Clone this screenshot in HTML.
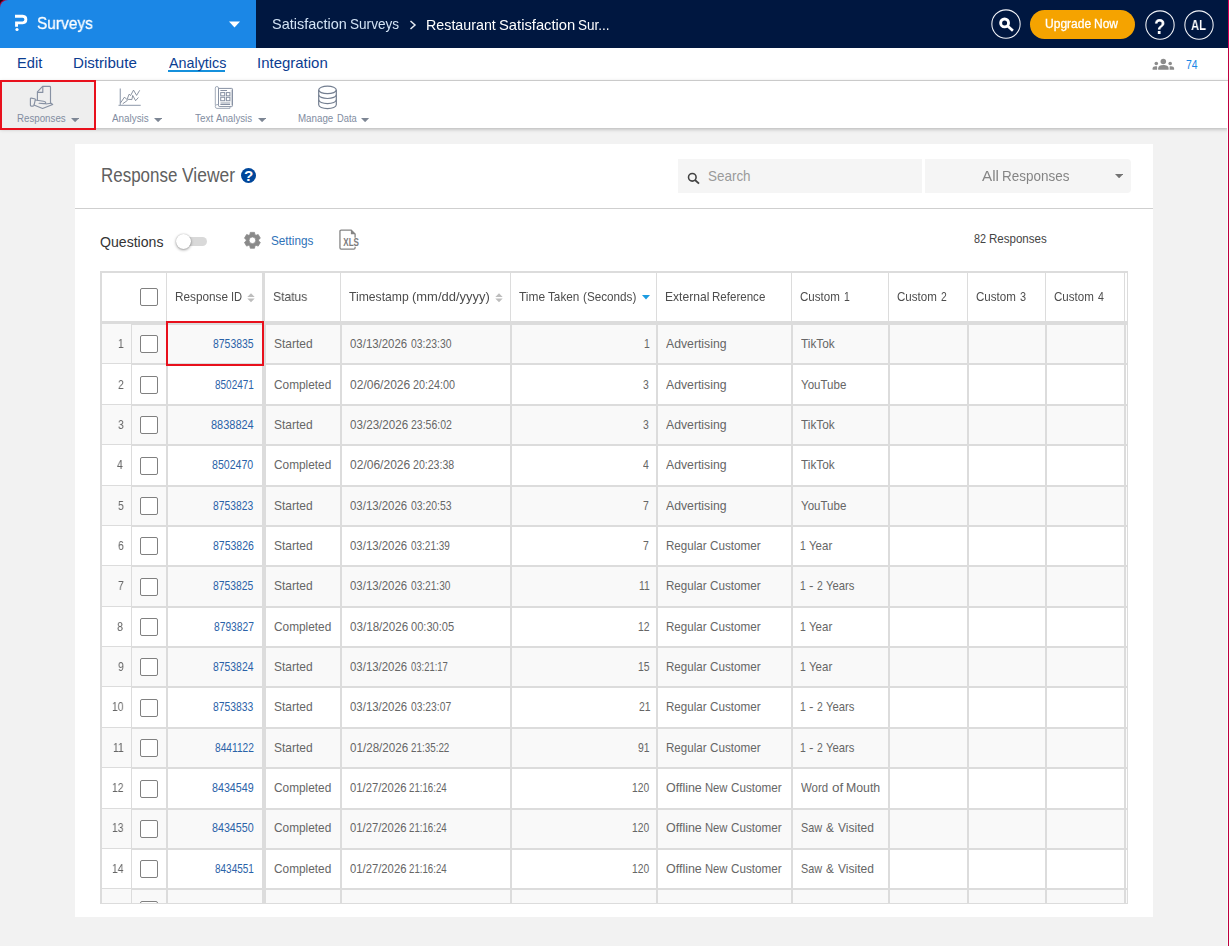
<!DOCTYPE html>
<html lang="en"><head><meta charset="utf-8"><title>Response Viewer</title>
<style>
html,body{margin:0;padding:0}
body{width:1229px;height:946px;overflow:hidden;position:relative;background:#f2f2f2;font-family:"Liberation Sans",sans-serif}
.L{display:block;position:static;margin:0;padding:0;height:0}
.L>div,.L>svg,.L>span{position:absolute;display:block}
.t{white-space:pre;transform-origin:0 0}
.w{display:inline-block;transform-origin:0 0;vertical-align:baseline}
</style></head><body>
<header class="L" id="header">
<div style="left:0px;top:0px;width:1229px;height:48px;background:#001740;"></div>
<div style="left:0px;top:0px;width:256px;height:48px;background:#1b87e6;"></div>
<div style="left:0;top:0;width:10px;height:10px;overflow:hidden;background:#1c0712"><div style="position:absolute;left:0;top:0;width:24px;height:24px;border-radius:8px;background:#1b87e6;box-shadow:0 0 0 1.2px #b0003c"></div></div>
<svg style="left:13.8px;top:14.25px" width="15" height="18" viewBox="0 0 15 18"><path d="M1 2.3 H8.75 A3.28 3.28 0 0 1 8.75 8.85 H2.55 V12.7" fill="none" stroke="#fff" stroke-width="2.9"/><circle cx="3" cy="15.5" r="1.6" fill="#fff"/></svg>
<svg style="left:228px;top:21px" width="13" height="7" viewBox="0 0 13 7"><path d="M1 0.6 H12 L6.5 6.4 Z" fill="#fff"/></svg>
<svg style="left:409px;top:20px" width="8" height="10" viewBox="0 0 8 10"><path d="M1.5 1 L6 5 L1.5 9" fill="none" stroke="#e6ebf2" stroke-width="1.5"/></svg>
<svg style="left:989.5px;top:8.399999999999999px" width="32" height="32" viewBox="0 0 32 32"><circle cx="16" cy="16" r="14.15" fill="none" stroke="#f2f4f8" stroke-width="1.05"/></svg>
<svg style="left:997px;top:15px" width="18" height="18" viewBox="0 0 18 18"><circle cx="7.6" cy="7.9" r="3.95" fill="none" stroke="#fff" stroke-width="2.9"/><path d="M10.4 10.7 L15.9 15.7" stroke="#fff" stroke-width="2.7"/></svg>
<div style="left:1030px;top:10px;width:105px;height:28.5px;background:#f5a300;border-radius:14.5px;"></div>
<svg style="left:1143.5px;top:8.5px" width="32" height="32" viewBox="0 0 32 32"><circle cx="16" cy="16" r="14.15" fill="none" stroke="#f2f4f8" stroke-width="1.05"/></svg>
<svg style="left:1182.6px;top:8.5px" width="32" height="32" viewBox="0 0 32 32"><circle cx="16" cy="16" r="14.15" fill="none" stroke="#f2f4f8" stroke-width="1.05"/></svg>
<span class="t" style="left:37.12px;top:15.25px;font-size:17.0px;line-height:17.0px;color:#fff;will-change:transform;-webkit-text-stroke:0.3px #fff;transform:scaleX(0.9087)">Surveys</span>
<span class="t" style="left:271.58px;top:16.25px;font-size:15.0px;line-height:15.0px;color:#d2e3f5;will-change:transform;"><span class="w" style="width:77.97px;transform:scaleX(0.9637)">Satisfaction </span><span class="w" style="transform:scaleX(0.9057)">Surveys</span></span>
<span class="t" style="left:426.11px;top:17.25px;font-size:15.0px;line-height:15.0px;color:#fff;will-change:transform;"><span class="w" style="width:72.58px;transform:scaleX(0.9514)">Restaurant </span><span class="w" style="width:79.09px;transform:scaleX(0.9835)">Satisfaction </span><span class="w" style="transform:scaleX(0.9015)">Sur...</span></span>
<span class="t" style="left:1045.34px;top:18.00px;font-size:12.5px;line-height:12.5px;color:#fff;-webkit-text-stroke:0.3px #fff;will-change:transform;"><span class="w" style="width:48.85px;transform:scaleX(0.9624)">Upgrade </span><span class="w" style="transform:scaleX(0.9583)">Now</span></span>
<span class="t" style="left:1154.08px;top:15.50px;font-size:22.5px;line-height:22.5px;color:#fff;font-weight:700;will-change:transform;transform:scaleX(0.8174)">?</span>
<span class="t" style="left:1191.25px;top:18.25px;font-size:14.0px;line-height:14.0px;color:#fff;font-weight:700;will-change:transform;transform:scaleX(0.8056)">AL</span>
</header>
<nav class="L" id="nav">
<div style="left:0px;top:48px;width:1229px;height:32px;background:#fff;"></div>
<div style="left:0px;top:80px;width:1229px;height:1px;background:#d9d9d9;"></div>
<div style="left:168px;top:70px;width:57px;height:2px;background:#1590dc;"></div>
<svg style="left:1152px;top:58px" width="23" height="12" viewBox="0 0 23 12"><g fill="#8c8c8c"><circle cx="11.3" cy="3.5" r="2.75"/><path d="M6.2 11.8 V10.2 C6.2 8 8.5 6.9 11.3 6.9 S16.6 8 16.6 10.2 V11.8 Z"/><circle cx="4.3" cy="5.5" r="1.8"/><path d="M0.6 11.8 V10.6 C0.6 9 2 8.2 3.6 8.2 C4.2 8.2 4.7 8.3 5.1 8.5 V11.8 Z"/><circle cx="18.2" cy="5.5" r="1.8"/><path d="M22.1 11.8 V10.6 C22.1 9 20.7 8.2 19.1 8.2 C18.5 8.2 18 8.3 17.6 8.5 V11.8 Z"/></g></svg>
<span class="t" style="left:16.68px;top:55.25px;font-size:15.0px;line-height:15.0px;color:#0b3d91;transform:scaleX(0.9755)">Edit</span>
<span class="t" style="left:73.24px;top:55.25px;font-size:15.0px;line-height:15.0px;color:#0b3d91;transform:scaleX(1.0081)">Distribute</span>
<span class="t" style="left:168.70px;top:55.25px;font-size:15.0px;line-height:15.0px;color:#0b3d91;transform:scaleX(0.9546)">Analytics</span>
<span class="t" style="left:257.05px;top:55.25px;font-size:15.0px;line-height:15.0px;color:#0b3d91;transform:scaleX(0.9978)">Integration</span>
<span class="t" style="left:1185.52px;top:58.25px;font-size:13.0px;line-height:13.0px;color:#1b87e6;transform:scaleX(0.8000)">74</span>
</nav>
<div class="L" id="toolbar">
<div style="left:0px;top:81px;width:1229px;height:47px;background:#fff;box-shadow:0 1px 4px rgba(0,0,0,.28);"></div>
<div style="left:0px;top:80px;width:96px;height:50px;background:#eeeeee;box-sizing:border-box;border:2px solid #e8101c;"></div>
<svg style="left:70.8px;top:118px" width="8.2" height="4.2" viewBox="0 0 8.2 4.2"><path d="M0 0 H8.2 L4.1 4.2 Z" fill="#7d8694"/></svg>
<svg style="left:153.8px;top:118px" width="8.2" height="4.2" viewBox="0 0 8.2 4.2"><path d="M0 0 H8.2 L4.1 4.2 Z" fill="#7d8694"/></svg>
<svg style="left:257.8px;top:118px" width="8.2" height="4.2" viewBox="0 0 8.2 4.2"><path d="M0 0 H8.2 L4.1 4.2 Z" fill="#7d8694"/></svg>
<svg style="left:361.4px;top:118px" width="8.2" height="4.2" viewBox="0 0 8.2 4.2"><path d="M0 0 H8.2 L4.1 4.2 Z" fill="#7d8694"/></svg>
<svg style="left:29px;top:85px" width="26" height="25" viewBox="0 0 26 25"><g fill="none" stroke="#8791a3" stroke-width="1.15" stroke-linejoin="round" stroke-linecap="round"><path d="M8.4 15.2 V6.8 L13.6 1.4 H20.7 Q21.5 1.4 21.5 2.2 V18.2"/><path d="M13.8 1.8 V7.4 H8.8"/><path d="M1.4 13.6 Q1.4 13 2.2 13.1 L5.6 13.7 Q6.5 13.9 6.3 14.8 L5 20.4 Q4.8 21.1 4 21.1 H2.2 Q1.4 21.1 1.4 20.3 Z"/><path d="M6.3 15 L14.5 16.2 Q16.8 16.6 16.8 18 Q16.6 18.8 15 18.6 L10.1 18.3"/><path d="M4.9 20 L13.6 23.5 L23.7 19.5 L22 18.2 L16.8 19"/></g></svg>
<svg style="left:118px;top:88px" width="24" height="19" viewBox="0 0 24 19"><g fill="none"><path d="M2.3 0.4 V17.8 M0.5 17.3 H22.7" stroke="#a3acba" stroke-width="1.3"/><g stroke="#6f7a8c" stroke-width="0.8"><path d="M2.6 14.8 L6.5 9.1 L9 11.6 L11.1 6.2 L12.6 7.5 L15.5 2.1 L18.6 7.4 L21.7 2.3"/><path d="M4.7 15.8 L9.2 12.6 L10.3 11.3 L13.9 11.6 L14.7 7.4 L17.6 12.7 L20.4 9.5"/></g></g></svg>
<svg style="left:214px;top:85px" width="20" height="25" viewBox="0 0 20 25"><g fill="none" stroke="#8791a3" stroke-width="1"><path d="M1.3 20.5 V3.1 A1.6 1.6 0 0 1 4.5 3.1 V20.4" stroke="#a3acba"/><path d="M4.5 3.4 H17.7 Q18.5 3.4 18.5 4.2 V20.6 Q18.5 21.6 17.5 21.6 H5.7 Q4.5 21.6 4.5 20.4 V3.4"/><path d="M4.5 19.6 H2.9 Q1.3 19.8 1.3 21.5 Q1.3 23.4 3 23.4 H16 V21.8" stroke="#a3acba"/><path d="M17.3 4.5 V20.5" stroke="#c5cad3"/><path d="M6.4 5.5 H13"/><rect x="6.7" y="7.6" width="4" height="3.2"/><rect x="12.4" y="7.6" width="3.5" height="3.2"/><rect x="6.7" y="12.3" width="4" height="3.4"/><rect x="12.4" y="12.3" width="3.5" height="3.4"/><rect x="6.5" y="16.9" width="9.5" height="2.4" fill="#c9ced6" stroke="none"/><path d="M6.4 19.5 H16"/></g></svg>
<svg style="left:317px;top:85px" width="21" height="25" viewBox="0 0 21 25"><g fill="none" stroke="#737e90" stroke-width="1.2"><ellipse cx="10.5" cy="4.9" rx="8.8" ry="3.8"/><path d="M1.7 4.9 V19.8 C1.7 21.9 5.6 23.6 10.5 23.6 S19.3 21.9 19.3 19.8 V4.9"/><path d="M1.7 9.7 C1.7 11.8 5.6 13.5 10.5 13.5 S19.3 11.8 19.3 9.7"/><path d="M1.7 14.8 C1.7 16.9 5.6 18.6 10.5 18.6 S19.3 16.9 19.3 14.8"/></g></svg>
<span class="t" style="left:17.21px;top:113.00px;font-size:10.5px;line-height:10.5px;color:#828da1;transform:scaleX(0.9262)">Responses</span>
<span class="t" style="left:111.90px;top:113.00px;font-size:10.5px;line-height:10.5px;color:#828da1;transform:scaleX(0.9394)">Analysis</span>
<span class="t" style="left:195.06px;top:113.00px;font-size:10.5px;line-height:10.5px;color:#828da1;"><span class="w" style="width:21.14px;transform:scaleX(0.9488)">Text </span><span class="w" style="transform:scaleX(0.9239)">Analysis</span></span>
<span class="t" style="left:298.10px;top:113.00px;font-size:10.5px;line-height:10.5px;color:#828da1;"><span class="w" style="width:38.50px;transform:scaleX(0.9285)">Manage </span><span class="w" style="transform:scaleX(0.8898)">Data</span></span>
</div>
<main class="L" id="card">
<div style="left:75px;top:144px;width:1078px;height:773px;background:#fff;"></div>
<div style="left:241px;top:167.8px;width:15.4px;height:15.4px;border-radius:50%;background:#00479b"></div>
<div style="left:75px;top:208px;width:1078px;height:1px;background:#cfcfcf;"></div>
<div style="left:678px;top:159px;width:244px;height:34px;background:#f5f5f5;"></div>
<svg style="left:687px;top:172px" width="13" height="13" viewBox="0 0 13 13"><circle cx="5.3" cy="5.3" r="3.8" fill="none" stroke="#424242" stroke-width="1.55"/><path d="M8 8 L12 11.6" stroke="#424242" stroke-width="1.8"/></svg>
<div style="left:925px;top:159px;width:206px;height:34px;background:#f5f5f5;border-radius:0 4px 4px 0;"></div>
<svg style="left:1114.7px;top:174px" width="8.2" height="4.4" viewBox="0 0 8.2 4.4"><path d="M0 0 H8.2 L4.1 4.3 Z" fill="#737373"/></svg>
<div style="left:183px;top:237.1px;width:23.9px;height:9.4px;background:#d9d9d9;border-radius:4.7px;"></div>
<div style="left:175.6px;top:233.6px;width:15.4px;height:15.4px;border-radius:50%;background:#fff;box-shadow:0 1px 3px rgba(0,0,0,.4),0 0 1px rgba(0,0,0,.25)"></div>
<svg style="left:243px;top:231px" width="19" height="19" viewBox="0 0 19 19"><path d="M7.28 1.38 L11.52 1.38 L11.92 3.64 L13.04 4.28 L15.20 3.50 L17.32 7.18 L15.57 8.65 L15.57 9.95 L17.32 11.42 L15.20 15.10 L13.04 14.32 L11.92 14.96 L11.52 17.22 L7.28 17.22 L6.88 14.96 L5.76 14.32 L3.60 15.10 L1.48 11.42 L3.23 9.95 L3.23 8.65 L1.48 7.18 L3.60 3.50 L5.76 4.28 L6.88 3.64 Z M12.75 9.3 A3.35 3.35 0 1 0 6.050000000000001 9.3 A3.35 3.35 0 1 0 12.75 9.3 Z" fill="#8a8a8a" fill-rule="evenodd" stroke="#8a8a8a" stroke-width="0.8" stroke-linejoin="round"/></svg>
<svg style="left:338px;top:229px" width="23" height="22" viewBox="0 0 23 22"><path d="M17.1 8.7 V5 L13.2 1.05 H3.2 Q1.95 1.05 1.95 2.3 V18.8 Q1.95 20.05 3.2 20.05 H15.8 Q17.1 20.05 17.1 18.8 V17.8" fill="none" stroke="#858585" stroke-width="1.3"/><path d="M12.9 1 V5.3 H17.2 Z" fill="#858585"/><text x="5.3" y="16.8" font-family="Liberation Sans, sans-serif" font-weight="700" font-size="10" fill="#7c7c7c" textLength="15.7" lengthAdjust="spacingAndGlyphs">XLS</text></svg>
<span class="t" style="left:100.70px;top:165.50px;font-size:19.5px;line-height:19.5px;color:#606060;"><span class="w" style="width:81.72px;transform:scaleX(0.8690)">Response </span><span class="w" style="transform:scaleX(0.8947)">Viewer</span></span>
<span class="t" style="left:244.41px;top:169.00px;font-size:14.5px;line-height:14.5px;color:#fff;font-weight:700;transform:scaleX(1.0500)">?</span>
<span class="t" style="left:707.63px;top:168.25px;font-size:15.0px;line-height:15.0px;color:#9a9a9a;transform:scaleX(0.8962)">Search</span>
<span class="t" style="left:981.70px;top:168.25px;font-size:15.0px;line-height:15.0px;color:#858585;will-change:transform;"><span class="w" style="width:19.97px;transform:scaleX(1.0159)">All </span><span class="w" style="transform:scaleX(0.8976)">Responses</span></span>
<span class="t" style="left:100.00px;top:234.25px;font-size:15.0px;line-height:15.0px;color:#333;transform:scaleX(0.9396)">Questions</span>
<span class="t" style="left:271.35px;top:234.25px;font-size:13.0px;line-height:13.0px;color:#2f72b8;transform:scaleX(0.9022)">Settings</span>
<span class="t" style="left:973.88px;top:232.25px;font-size:13.0px;line-height:13.0px;color:#444;"><span class="w" style="width:15.45px;transform:scaleX(0.8333)">82 </span><span class="w" style="transform:scaleX(0.8863)">Responses</span></span>
</main>
<section class="L" id="grid">
<div style="left:100px;top:325px;width:1028px;height:38px;background:#f9f9f9;"></div>
<div style="left:100px;top:406px;width:1028px;height:38px;background:#f9f9f9;"></div>
<div style="left:100px;top:487px;width:1028px;height:38px;background:#f9f9f9;"></div>
<div style="left:100px;top:567px;width:1028px;height:39px;background:#f9f9f9;"></div>
<div style="left:100px;top:648px;width:1028px;height:38px;background:#f9f9f9;"></div>
<div style="left:100px;top:729px;width:1028px;height:38px;background:#f9f9f9;"></div>
<div style="left:100px;top:810px;width:1028px;height:38px;background:#f9f9f9;"></div>
<div style="left:100px;top:890px;width:1028px;height:13px;background:#f9f9f9;"></div>
<div style="left:100px;top:271px;width:1028px;height:2px;background:#dcdcdc;"></div>
<div style="left:100px;top:321px;width:1028px;height:4px;background:#dcdcdc;"></div>
<div style="left:102px;top:324px;width:29px;height:1px;background:#f9f9f9;"></div>
<div style="left:100px;top:363px;width:1028px;height:2px;background:#dcdcdc;"></div>
<div style="left:102px;top:364px;width:29px;height:1px;background:#fff;"></div>
<div style="left:100px;top:404px;width:1028px;height:2px;background:#dcdcdc;"></div>
<div style="left:102px;top:405px;width:29px;height:1px;background:#f9f9f9;"></div>
<div style="left:100px;top:444px;width:1028px;height:2px;background:#dcdcdc;"></div>
<div style="left:102px;top:445px;width:29px;height:1px;background:#fff;"></div>
<div style="left:100px;top:485px;width:1028px;height:2px;background:#dcdcdc;"></div>
<div style="left:102px;top:486px;width:29px;height:1px;background:#f9f9f9;"></div>
<div style="left:100px;top:525px;width:1028px;height:2px;background:#dcdcdc;"></div>
<div style="left:102px;top:526px;width:29px;height:1px;background:#fff;"></div>
<div style="left:100px;top:565px;width:1028px;height:2px;background:#dcdcdc;"></div>
<div style="left:102px;top:566px;width:29px;height:1px;background:#f9f9f9;"></div>
<div style="left:100px;top:606px;width:1028px;height:2px;background:#dcdcdc;"></div>
<div style="left:102px;top:607px;width:29px;height:1px;background:#fff;"></div>
<div style="left:100px;top:646px;width:1028px;height:2px;background:#dcdcdc;"></div>
<div style="left:102px;top:647px;width:29px;height:1px;background:#f9f9f9;"></div>
<div style="left:100px;top:686px;width:1028px;height:2px;background:#dcdcdc;"></div>
<div style="left:102px;top:687px;width:29px;height:1px;background:#fff;"></div>
<div style="left:100px;top:727px;width:1028px;height:2px;background:#dcdcdc;"></div>
<div style="left:102px;top:728px;width:29px;height:1px;background:#f9f9f9;"></div>
<div style="left:100px;top:767px;width:1028px;height:2px;background:#dcdcdc;"></div>
<div style="left:102px;top:768px;width:29px;height:1px;background:#fff;"></div>
<div style="left:100px;top:808px;width:1028px;height:2px;background:#dcdcdc;"></div>
<div style="left:102px;top:809px;width:29px;height:1px;background:#f9f9f9;"></div>
<div style="left:100px;top:848px;width:1028px;height:2px;background:#dcdcdc;"></div>
<div style="left:102px;top:849px;width:29px;height:1px;background:#fff;"></div>
<div style="left:100px;top:888px;width:1028px;height:2px;background:#dcdcdc;"></div>
<div style="left:102px;top:889px;width:29px;height:1px;background:#f9f9f9;"></div>
<div style="left:100px;top:903px;width:1028px;height:1px;background:#dcdcdc;"></div>
<div style="left:100px;top:271px;width:2px;height:633px;background:#dcdcdc;"></div>
<div style="left:131px;top:324px;width:1px;height:579px;background:#dcdcdc;"></div>
<div style="left:166px;top:273px;width:1px;height:48px;background:#dcdcdc;"></div>
<div style="left:166px;top:325px;width:2px;height:578px;background:#dcdcdc;"></div>
<div style="left:340px;top:273px;width:1px;height:48px;background:#dcdcdc;"></div>
<div style="left:340px;top:325px;width:2px;height:578px;background:#dcdcdc;"></div>
<div style="left:510px;top:273px;width:1px;height:48px;background:#dcdcdc;"></div>
<div style="left:510px;top:325px;width:2px;height:578px;background:#dcdcdc;"></div>
<div style="left:656px;top:273px;width:1px;height:48px;background:#dcdcdc;"></div>
<div style="left:656px;top:325px;width:2px;height:578px;background:#dcdcdc;"></div>
<div style="left:791px;top:273px;width:1px;height:48px;background:#dcdcdc;"></div>
<div style="left:791px;top:325px;width:2px;height:578px;background:#dcdcdc;"></div>
<div style="left:888px;top:273px;width:1px;height:48px;background:#dcdcdc;"></div>
<div style="left:888px;top:325px;width:2px;height:578px;background:#dcdcdc;"></div>
<div style="left:967px;top:273px;width:1px;height:48px;background:#dcdcdc;"></div>
<div style="left:967px;top:325px;width:2px;height:578px;background:#dcdcdc;"></div>
<div style="left:1045px;top:273px;width:1px;height:48px;background:#dcdcdc;"></div>
<div style="left:1045px;top:325px;width:2px;height:578px;background:#dcdcdc;"></div>
<div style="left:1124px;top:273px;width:1px;height:48px;background:#dcdcdc;"></div>
<div style="left:1124px;top:325px;width:2px;height:578px;background:#dcdcdc;"></div>
<div style="left:262px;top:273px;width:3px;height:48px;background:#dcdcdc;"></div>
<div style="left:262px;top:325px;width:4px;height:578px;background:#dcdcdc;"></div>
<div style="left:1127px;top:271px;width:1px;height:633px;background:#dcdcdc;"></div>
<div style="left:166px;top:321px;width:98px;height:45px;box-sizing:border-box;border:2px solid #e8101c"></div>
<div style="left:140px;top:288px;width:18px;height:18px;box-sizing:border-box;border:1px solid #808080;border-radius:2px;background:#fff"></div>
<svg style="left:246.8px;top:292.5px" width="8" height="10" viewBox="0 0 8 10"><path d="M0.3 4 L4 0.3 L7.7 4 Z M0.3 5.6 H7.7 L4 9.3 Z" fill="#bdbdbd"/></svg>
<svg style="left:495.2px;top:292.5px" width="8" height="10" viewBox="0 0 8 10"><path d="M0.3 4 L4 0.3 L7.7 4 Z M0.3 5.6 H7.7 L4 9.3 Z" fill="#bdbdbd"/></svg>
<svg style="left:641.5px;top:295px" width="8" height="5" viewBox="0 0 8 5"><path d="M0 0 H8 L4 4.4 Z" fill="#1b9be0"/></svg>
<div style="left:140px;top:335px;width:18px;height:18px;box-sizing:border-box;border:1px solid #808080;border-radius:2px;background:#fff"></div>
<div style="left:140px;top:376px;width:18px;height:18px;box-sizing:border-box;border:1px solid #808080;border-radius:2px;background:#fff"></div>
<div style="left:140px;top:416px;width:18px;height:18px;box-sizing:border-box;border:1px solid #808080;border-radius:2px;background:#fff"></div>
<div style="left:140px;top:457px;width:18px;height:18px;box-sizing:border-box;border:1px solid #808080;border-radius:2px;background:#fff"></div>
<div style="left:140px;top:497px;width:18px;height:18px;box-sizing:border-box;border:1px solid #808080;border-radius:2px;background:#fff"></div>
<div style="left:140px;top:537px;width:18px;height:18px;box-sizing:border-box;border:1px solid #808080;border-radius:2px;background:#fff"></div>
<div style="left:140px;top:578px;width:18px;height:18px;box-sizing:border-box;border:1px solid #808080;border-radius:2px;background:#fff"></div>
<div style="left:140px;top:618px;width:18px;height:18px;box-sizing:border-box;border:1px solid #808080;border-radius:2px;background:#fff"></div>
<div style="left:140px;top:658px;width:18px;height:18px;box-sizing:border-box;border:1px solid #808080;border-radius:2px;background:#fff"></div>
<div style="left:140px;top:699px;width:18px;height:18px;box-sizing:border-box;border:1px solid #808080;border-radius:2px;background:#fff"></div>
<div style="left:140px;top:739px;width:18px;height:18px;box-sizing:border-box;border:1px solid #808080;border-radius:2px;background:#fff"></div>
<div style="left:140px;top:780px;width:18px;height:18px;box-sizing:border-box;border:1px solid #808080;border-radius:2px;background:#fff"></div>
<div style="left:140px;top:820px;width:18px;height:18px;box-sizing:border-box;border:1px solid #808080;border-radius:2px;background:#fff"></div>
<div style="left:140px;top:860px;width:18px;height:18px;box-sizing:border-box;border:1px solid #808080;border-radius:2px;background:#fff"></div>
<div style="left:140px;top:901px;width:18px;height:2px;overflow:hidden"><div style="position:absolute;left:0;top:0;width:18px;height:18px;box-sizing:border-box;border:1px solid #808080;border-radius:2px;background:#fff"></div></div>
<span class="t" style="left:174.60px;top:290.25px;font-size:13.0px;line-height:13.0px;color:#4d4d4d;will-change:transform;"><span class="w" style="width:55.99px;transform:scaleX(0.9041)">Response </span><span class="w" style="transform:scaleX(0.8575)">ID</span></span>
<span class="t" style="left:272.83px;top:290.25px;font-size:13.0px;line-height:13.0px;color:#4d4d4d;will-change:transform;transform:scaleX(0.9306)">Status</span>
<span class="t" style="left:348.67px;top:290.25px;font-size:13.0px;line-height:13.0px;color:#4d4d4d;will-change:transform;"><span class="w" style="width:62.64px;transform:scaleX(0.9365)">Timestamp </span><span class="w" style="transform:scaleX(0.9967)">(mm/dd/yyyy)</span></span>
<span class="t" style="left:518.77px;top:290.25px;font-size:13.0px;line-height:13.0px;color:#4d4d4d;will-change:transform;"><span class="w" style="width:29.19px;transform:scaleX(0.9189)">Time </span><span class="w" style="width:34.55px;transform:scaleX(0.9037)">Taken </span><span class="w" style="transform:scaleX(0.9004)">(Seconds)</span></span>
<span class="t" style="left:665.27px;top:290.25px;font-size:13.0px;line-height:13.0px;color:#4d4d4d;will-change:transform;"><span class="w" style="width:47.10px;transform:scaleX(0.9293)">External </span><span class="w" style="transform:scaleX(0.8889)">Reference</span></span>
<span class="t" style="left:799.65px;top:290.25px;font-size:13.0px;line-height:13.0px;color:#4d4d4d;will-change:transform;"><span class="w" style="width:43.57px;transform:scaleX(0.8908)">Custom </span><span class="w" style="transform:scaleX(0.8000)">1</span></span>
<span class="t" style="left:896.85px;top:290.25px;font-size:13.0px;line-height:13.0px;color:#4d4d4d;will-change:transform;"><span class="w" style="width:43.99px;transform:scaleX(0.8908)">Custom </span><span class="w" style="transform:scaleX(0.8000)">2</span></span>
<span class="t" style="left:975.85px;top:290.25px;font-size:13.0px;line-height:13.0px;color:#4d4d4d;will-change:transform;"><span class="w" style="width:43.97px;transform:scaleX(0.8908)">Custom </span><span class="w" style="transform:scaleX(0.8400)">3</span></span>
<span class="t" style="left:1053.85px;top:290.25px;font-size:13.0px;line-height:13.0px;color:#4d4d4d;will-change:transform;"><span class="w" style="width:44.44px;transform:scaleX(0.8908)">Custom </span><span class="w" style="transform:scaleX(0.8148)">4</span></span>
<span class="t" style="left:118.30px;top:337.25px;font-size:13.0px;line-height:13.0px;color:#666;will-change:transform;transform:scaleX(0.8000)">1</span>
<span class="t" style="left:212.95px;top:337.25px;font-size:13.0px;line-height:13.0px;color:#2a62a8;transform:scaleX(0.8030)">8753835</span>
<span class="t" style="left:274.01px;top:337.25px;font-size:13.0px;line-height:13.0px;color:#666666;transform:scaleX(0.9202)">Started</span>
<span class="t" style="left:349.61px;top:337.25px;font-size:13.0px;line-height:13.0px;color:#666666;"><span class="w" style="width:60.93px;transform:scaleX(0.8789)">03/13/2026 </span><span class="w" style="transform:scaleX(0.7990)">03:23:30</span></span>
<span class="t" style="left:644.00px;top:337.25px;font-size:13.0px;line-height:13.0px;color:#666666;transform:scaleX(0.8000)">1</span>
<span class="t" style="left:666.02px;top:337.25px;font-size:13.0px;line-height:13.0px;color:#666666;transform:scaleX(0.9409)">Advertising</span>
<span class="t" style="left:800.77px;top:337.25px;font-size:13.0px;line-height:13.0px;color:#666666;transform:scaleX(0.9082)">TikTok</span>
<span class="t" style="left:117.62px;top:378.25px;font-size:13.0px;line-height:13.0px;color:#666;will-change:transform;transform:scaleX(0.8000)">2</span>
<span class="t" style="left:214.72px;top:378.25px;font-size:13.0px;line-height:13.0px;color:#2a62a8;transform:scaleX(0.7677)">8502471</span>
<span class="t" style="left:274.27px;top:378.25px;font-size:13.0px;line-height:13.0px;color:#666666;transform:scaleX(0.9106)">Completed</span>
<span class="t" style="left:349.59px;top:378.25px;font-size:13.0px;line-height:13.0px;color:#666666;"><span class="w" style="width:63.45px;transform:scaleX(0.9258)">02/06/2026 </span><span class="w" style="transform:scaleX(0.8291)">20:24:00</span></span>
<span class="t" style="left:643.33px;top:378.25px;font-size:13.0px;line-height:13.0px;color:#666666;transform:scaleX(0.8000)">3</span>
<span class="t" style="left:666.02px;top:378.25px;font-size:13.0px;line-height:13.0px;color:#666666;transform:scaleX(0.9409)">Advertising</span>
<span class="t" style="left:800.90px;top:378.25px;font-size:13.0px;line-height:13.0px;color:#666666;transform:scaleX(0.8881)">YouTube</span>
<span class="t" style="left:117.62px;top:418.25px;font-size:13.0px;line-height:13.0px;color:#666;will-change:transform;transform:scaleX(0.8000)">3</span>
<span class="t" style="left:210.68px;top:418.25px;font-size:13.0px;line-height:13.0px;color:#2a62a8;transform:scaleX(0.8442)">8838824</span>
<span class="t" style="left:274.01px;top:418.25px;font-size:13.0px;line-height:13.0px;color:#666666;transform:scaleX(0.9202)">Started</span>
<span class="t" style="left:349.60px;top:418.25px;font-size:13.0px;line-height:13.0px;color:#666666;"><span class="w" style="width:61.36px;transform:scaleX(0.8945)">03/23/2026 </span><span class="w" style="transform:scaleX(0.8081)">23:56:02</span></span>
<span class="t" style="left:643.33px;top:418.25px;font-size:13.0px;line-height:13.0px;color:#666666;transform:scaleX(0.8000)">3</span>
<span class="t" style="left:666.02px;top:418.25px;font-size:13.0px;line-height:13.0px;color:#666666;transform:scaleX(0.9409)">Advertising</span>
<span class="t" style="left:800.77px;top:418.25px;font-size:13.0px;line-height:13.0px;color:#666666;transform:scaleX(0.9082)">TikTok</span>
<span class="t" style="left:117.38px;top:458.25px;font-size:13.0px;line-height:13.0px;color:#666;will-change:transform;transform:scaleX(0.8000)">4</span>
<span class="t" style="left:212.19px;top:458.25px;font-size:13.0px;line-height:13.0px;color:#2a62a8;transform:scaleX(0.8141)">8502470</span>
<span class="t" style="left:274.27px;top:458.25px;font-size:13.0px;line-height:13.0px;color:#666666;transform:scaleX(0.9106)">Completed</span>
<span class="t" style="left:349.59px;top:458.25px;font-size:13.0px;line-height:13.0px;color:#666666;"><span class="w" style="width:63.46px;transform:scaleX(0.9258)">02/06/2026 </span><span class="w" style="transform:scaleX(0.8131)">20:23:38</span></span>
<span class="t" style="left:643.08px;top:458.25px;font-size:13.0px;line-height:13.0px;color:#666666;transform:scaleX(0.8000)">4</span>
<span class="t" style="left:666.02px;top:458.25px;font-size:13.0px;line-height:13.0px;color:#666666;transform:scaleX(0.9409)">Advertising</span>
<span class="t" style="left:800.77px;top:458.25px;font-size:13.0px;line-height:13.0px;color:#666666;transform:scaleX(0.9082)">TikTok</span>
<span class="t" style="left:117.62px;top:499.25px;font-size:13.0px;line-height:13.0px;color:#666;will-change:transform;transform:scaleX(0.8000)">5</span>
<span class="t" style="left:213.45px;top:499.25px;font-size:13.0px;line-height:13.0px;color:#2a62a8;transform:scaleX(0.7929)">8753823</span>
<span class="t" style="left:274.01px;top:499.25px;font-size:13.0px;line-height:13.0px;color:#666666;transform:scaleX(0.9202)">Started</span>
<span class="t" style="left:349.61px;top:499.25px;font-size:13.0px;line-height:13.0px;color:#666666;"><span class="w" style="width:60.93px;transform:scaleX(0.8789)">03/13/2026 </span><span class="w" style="transform:scaleX(0.8030)">03:20:53</span></span>
<span class="t" style="left:643.45px;top:499.25px;font-size:13.0px;line-height:13.0px;color:#666666;transform:scaleX(0.8000)">7</span>
<span class="t" style="left:666.02px;top:499.25px;font-size:13.0px;line-height:13.0px;color:#666666;transform:scaleX(0.9409)">Advertising</span>
<span class="t" style="left:800.90px;top:499.25px;font-size:13.0px;line-height:13.0px;color:#666666;transform:scaleX(0.8881)">YouTube</span>
<span class="t" style="left:117.50px;top:539.25px;font-size:13.0px;line-height:13.0px;color:#666;will-change:transform;transform:scaleX(0.8000)">6</span>
<span class="t" style="left:212.70px;top:539.25px;font-size:13.0px;line-height:13.0px;color:#2a62a8;transform:scaleX(0.8081)">8753826</span>
<span class="t" style="left:274.01px;top:539.25px;font-size:13.0px;line-height:13.0px;color:#666666;transform:scaleX(0.9202)">Started</span>
<span class="t" style="left:349.61px;top:539.25px;font-size:13.0px;line-height:13.0px;color:#666666;"><span class="w" style="width:60.95px;transform:scaleX(0.8789)">03/13/2026 </span><span class="w" style="transform:scaleX(0.7677)">03:21:39</span></span>
<span class="t" style="left:643.45px;top:539.25px;font-size:13.0px;line-height:13.0px;color:#666666;transform:scaleX(0.8000)">7</span>
<span class="t" style="left:666.14px;top:539.25px;font-size:13.0px;line-height:13.0px;color:#666666;"><span class="w" style="width:43.67px;transform:scaleX(0.8898)">Regular </span><span class="w" style="transform:scaleX(0.8991)">Customer</span></span>
<span class="t" style="left:799.96px;top:539.25px;font-size:13.0px;line-height:13.0px;color:#666666;"><span class="w" style="width:9.17px;transform:scaleX(0.8000)">1 </span><span class="w" style="transform:scaleX(0.8835)">Year</span></span>
<span class="t" style="left:117.75px;top:579.25px;font-size:13.0px;line-height:13.0px;color:#666;will-change:transform;transform:scaleX(0.8000)">7</span>
<span class="t" style="left:213.20px;top:579.25px;font-size:13.0px;line-height:13.0px;color:#2a62a8;transform:scaleX(0.7980)">8753825</span>
<span class="t" style="left:274.01px;top:579.25px;font-size:13.0px;line-height:13.0px;color:#666666;transform:scaleX(0.9202)">Started</span>
<span class="t" style="left:349.61px;top:579.25px;font-size:13.0px;line-height:13.0px;color:#666666;"><span class="w" style="width:60.94px;transform:scaleX(0.8789)">03/13/2026 </span><span class="w" style="transform:scaleX(0.7789)">03:21:30</span></span>
<span class="t" style="left:639.12px;top:579.25px;font-size:13.0px;line-height:13.0px;color:#666666;transform:scaleX(0.8000)">11</span>
<span class="t" style="left:666.14px;top:579.25px;font-size:13.0px;line-height:13.0px;color:#666666;"><span class="w" style="width:43.67px;transform:scaleX(0.8898)">Regular </span><span class="w" style="transform:scaleX(0.8991)">Customer</span></span>
<span class="t" style="left:799.96px;top:579.25px;font-size:13.0px;line-height:13.0px;color:#666666;"><span class="w" style="width:9.49px;transform:scaleX(0.8000)">1 </span><span class="w" style="width:7.58px;transform:scaleX(1.0385)">- </span><span class="w" style="width:9.04px;transform:scaleX(0.8000)">2 </span><span class="w" style="transform:scaleX(0.8672)">Years</span></span>
<span class="t" style="left:117.23px;top:620.25px;font-size:13.0px;line-height:13.0px;color:#666;will-change:transform;transform:scaleX(0.8400)">8</span>
<span class="t" style="left:213.71px;top:620.25px;font-size:13.0px;line-height:13.0px;color:#2a62a8;transform:scaleX(0.7879)">8793827</span>
<span class="t" style="left:274.27px;top:620.25px;font-size:13.0px;line-height:13.0px;color:#666666;transform:scaleX(0.9106)">Completed</span>
<span class="t" style="left:349.60px;top:620.25px;font-size:13.0px;line-height:13.0px;color:#666666;"><span class="w" style="width:61.80px;transform:scaleX(0.8945)">03/18/2026 </span><span class="w" style="transform:scaleX(0.8535)">00:30:05</span></span>
<span class="t" style="left:637.85px;top:620.25px;font-size:13.0px;line-height:13.0px;color:#666666;transform:scaleX(0.8000)">12</span>
<span class="t" style="left:666.14px;top:620.25px;font-size:13.0px;line-height:13.0px;color:#666666;"><span class="w" style="width:43.67px;transform:scaleX(0.8898)">Regular </span><span class="w" style="transform:scaleX(0.8991)">Customer</span></span>
<span class="t" style="left:799.96px;top:620.25px;font-size:13.0px;line-height:13.0px;color:#666666;"><span class="w" style="width:9.17px;transform:scaleX(0.8000)">1 </span><span class="w" style="transform:scaleX(0.8835)">Year</span></span>
<span class="t" style="left:117.50px;top:660.25px;font-size:13.0px;line-height:13.0px;color:#666;will-change:transform;transform:scaleX(0.8000)">9</span>
<span class="t" style="left:212.95px;top:660.25px;font-size:13.0px;line-height:13.0px;color:#2a62a8;transform:scaleX(0.7990)">8753824</span>
<span class="t" style="left:274.01px;top:660.25px;font-size:13.0px;line-height:13.0px;color:#666666;transform:scaleX(0.9202)">Started</span>
<span class="t" style="left:349.61px;top:660.25px;font-size:13.0px;line-height:13.0px;color:#666666;"><span class="w" style="width:60.97px;transform:scaleX(0.8789)">03/13/2026 </span><span class="w" style="transform:scaleX(0.7273)">03:21:17</span></span>
<span class="t" style="left:637.73px;top:660.25px;font-size:13.0px;line-height:13.0px;color:#666666;transform:scaleX(0.8000)">15</span>
<span class="t" style="left:666.14px;top:660.25px;font-size:13.0px;line-height:13.0px;color:#666666;"><span class="w" style="width:43.67px;transform:scaleX(0.8898)">Regular </span><span class="w" style="transform:scaleX(0.8991)">Customer</span></span>
<span class="t" style="left:799.96px;top:660.25px;font-size:13.0px;line-height:13.0px;color:#666666;"><span class="w" style="width:9.17px;transform:scaleX(0.8000)">1 </span><span class="w" style="transform:scaleX(0.8835)">Year</span></span>
<span class="t" style="left:111.78px;top:700.25px;font-size:13.0px;line-height:13.0px;color:#666;will-change:transform;transform:scaleX(0.8000)">10</span>
<span class="t" style="left:213.20px;top:700.25px;font-size:13.0px;line-height:13.0px;color:#2a62a8;transform:scaleX(0.7980)">8753833</span>
<span class="t" style="left:274.01px;top:700.25px;font-size:13.0px;line-height:13.0px;color:#666666;transform:scaleX(0.9202)">Started</span>
<span class="t" style="left:349.61px;top:700.25px;font-size:13.0px;line-height:13.0px;color:#666666;"><span class="w" style="width:60.93px;transform:scaleX(0.8789)">03/13/2026 </span><span class="w" style="transform:scaleX(0.7929)">03:23:07</span></span>
<span class="t" style="left:638.55px;top:700.25px;font-size:13.0px;line-height:13.0px;color:#666666;transform:scaleX(0.8000)">21</span>
<span class="t" style="left:666.14px;top:700.25px;font-size:13.0px;line-height:13.0px;color:#666666;"><span class="w" style="width:43.67px;transform:scaleX(0.8898)">Regular </span><span class="w" style="transform:scaleX(0.8991)">Customer</span></span>
<span class="t" style="left:799.96px;top:700.25px;font-size:13.0px;line-height:13.0px;color:#666666;"><span class="w" style="width:9.49px;transform:scaleX(0.8000)">1 </span><span class="w" style="width:7.58px;transform:scaleX(1.0385)">- </span><span class="w" style="width:9.04px;transform:scaleX(0.8000)">2 </span><span class="w" style="transform:scaleX(0.8672)">Years</span></span>
<span class="t" style="left:113.43px;top:741.25px;font-size:13.0px;line-height:13.0px;color:#666;will-change:transform;transform:scaleX(0.8000)">11</span>
<span class="t" style="left:214.71px;top:741.25px;font-size:13.0px;line-height:13.0px;color:#2a62a8;transform:scaleX(0.7835)">8441122</span>
<span class="t" style="left:274.01px;top:741.25px;font-size:13.0px;line-height:13.0px;color:#666666;transform:scaleX(0.9202)">Started</span>
<span class="t" style="left:349.60px;top:741.25px;font-size:13.0px;line-height:13.0px;color:#666666;"><span class="w" style="width:61.49px;transform:scaleX(0.8945)">01/28/2026 </span><span class="w" style="transform:scaleX(0.7576)">21:35:22</span></span>
<span class="t" style="left:638.30px;top:741.25px;font-size:13.0px;line-height:13.0px;color:#666666;transform:scaleX(0.8000)">91</span>
<span class="t" style="left:666.14px;top:741.25px;font-size:13.0px;line-height:13.0px;color:#666666;"><span class="w" style="width:43.67px;transform:scaleX(0.8898)">Regular </span><span class="w" style="transform:scaleX(0.8991)">Customer</span></span>
<span class="t" style="left:799.96px;top:741.25px;font-size:13.0px;line-height:13.0px;color:#666666;"><span class="w" style="width:9.49px;transform:scaleX(0.8000)">1 </span><span class="w" style="width:7.58px;transform:scaleX(1.0385)">- </span><span class="w" style="width:9.04px;transform:scaleX(0.8000)">2 </span><span class="w" style="transform:scaleX(0.8672)">Years</span></span>
<span class="t" style="left:112.15px;top:781.25px;font-size:13.0px;line-height:13.0px;color:#666;will-change:transform;transform:scaleX(0.8000)">12</span>
<span class="t" style="left:211.94px;top:781.25px;font-size:13.0px;line-height:13.0px;color:#2a62a8;transform:scaleX(0.8232)">8434549</span>
<span class="t" style="left:274.27px;top:781.25px;font-size:13.0px;line-height:13.0px;color:#666666;transform:scaleX(0.9106)">Completed</span>
<span class="t" style="left:349.62px;top:781.25px;font-size:13.0px;line-height:13.0px;color:#666666;"><span class="w" style="width:59.62px;transform:scaleX(0.8672)">01/27/2026 </span><span class="w" style="transform:scaleX(0.7437)">21:16:24</span></span>
<span class="t" style="left:631.81px;top:781.25px;font-size:13.0px;line-height:13.0px;color:#666666;transform:scaleX(0.7901)">120</span>
<span class="t" style="left:666.05px;top:781.25px;font-size:13.0px;line-height:13.0px;color:#666666;"><span class="w" style="width:39.25px;transform:scaleX(0.9586)">Offline </span><span class="w" style="width:26.08px;transform:scaleX(0.8650)">New </span><span class="w" style="transform:scaleX(0.8991)">Customer</span></span>
<span class="t" style="left:801.25px;top:781.25px;font-size:13.0px;line-height:13.0px;color:#666666;"><span class="w" style="width:30.74px;transform:scaleX(0.8792)">Word </span><span class="w" style="width:13.71px;transform:scaleX(1.0357)">of </span><span class="w" style="transform:scaleX(0.9453)">Mouth</span></span>
<span class="t" style="left:112.15px;top:821.25px;font-size:13.0px;line-height:13.0px;color:#666;will-change:transform;transform:scaleX(0.8000)">13</span>
<span class="t" style="left:211.69px;top:821.25px;font-size:13.0px;line-height:13.0px;color:#2a62a8;transform:scaleX(0.8241)">8434550</span>
<span class="t" style="left:274.27px;top:821.25px;font-size:13.0px;line-height:13.0px;color:#666666;transform:scaleX(0.9106)">Completed</span>
<span class="t" style="left:349.62px;top:821.25px;font-size:13.0px;line-height:13.0px;color:#666666;"><span class="w" style="width:59.62px;transform:scaleX(0.8672)">01/27/2026 </span><span class="w" style="transform:scaleX(0.7437)">21:16:24</span></span>
<span class="t" style="left:631.81px;top:821.25px;font-size:13.0px;line-height:13.0px;color:#666666;transform:scaleX(0.7901)">120</span>
<span class="t" style="left:666.05px;top:821.25px;font-size:13.0px;line-height:13.0px;color:#666666;"><span class="w" style="width:39.25px;transform:scaleX(0.9586)">Offline </span><span class="w" style="width:26.08px;transform:scaleX(0.8650)">New </span><span class="w" style="transform:scaleX(0.8991)">Customer</span></span>
<span class="t" style="left:800.96px;top:821.25px;font-size:13.0px;line-height:13.0px;color:#666666;"><span class="w" style="width:25.15px;transform:scaleX(0.8333)">Saw </span><span class="w" style="width:11.45px;transform:scaleX(0.9062)">&amp; </span><span class="w" style="transform:scaleX(0.9243)">Visited</span></span>
<span class="t" style="left:111.68px;top:862.25px;font-size:13.0px;line-height:13.0px;color:#666;will-change:transform;transform:scaleX(0.8000)">14</span>
<span class="t" style="left:214.72px;top:862.25px;font-size:13.0px;line-height:13.0px;color:#2a62a8;transform:scaleX(0.7677)">8434551</span>
<span class="t" style="left:274.27px;top:862.25px;font-size:13.0px;line-height:13.0px;color:#666666;transform:scaleX(0.9106)">Completed</span>
<span class="t" style="left:349.62px;top:862.25px;font-size:13.0px;line-height:13.0px;color:#666666;"><span class="w" style="width:59.62px;transform:scaleX(0.8672)">01/27/2026 </span><span class="w" style="transform:scaleX(0.7437)">21:16:24</span></span>
<span class="t" style="left:631.81px;top:862.25px;font-size:13.0px;line-height:13.0px;color:#666666;transform:scaleX(0.7901)">120</span>
<span class="t" style="left:666.05px;top:862.25px;font-size:13.0px;line-height:13.0px;color:#666666;"><span class="w" style="width:39.25px;transform:scaleX(0.9586)">Offline </span><span class="w" style="width:26.08px;transform:scaleX(0.8650)">New </span><span class="w" style="transform:scaleX(0.8991)">Customer</span></span>
<span class="t" style="left:800.96px;top:862.25px;font-size:13.0px;line-height:13.0px;color:#666666;"><span class="w" style="width:25.15px;transform:scaleX(0.8333)">Saw </span><span class="w" style="width:11.45px;transform:scaleX(0.9062)">&amp; </span><span class="w" style="transform:scaleX(0.9243)">Visited</span></span>
</section>
<div class="L" id="edge">
<div style="left:1227px;top:128px;width:1px;height:818px;background:#f6fffb;"></div>
<div style="left:1228px;top:0px;width:1px;height:946px;background:#c0003f;"></div>
<div style="left:1228px;top:0px;width:1px;height:48px;background:#d90055;"></div>
</div>
</body></html>
